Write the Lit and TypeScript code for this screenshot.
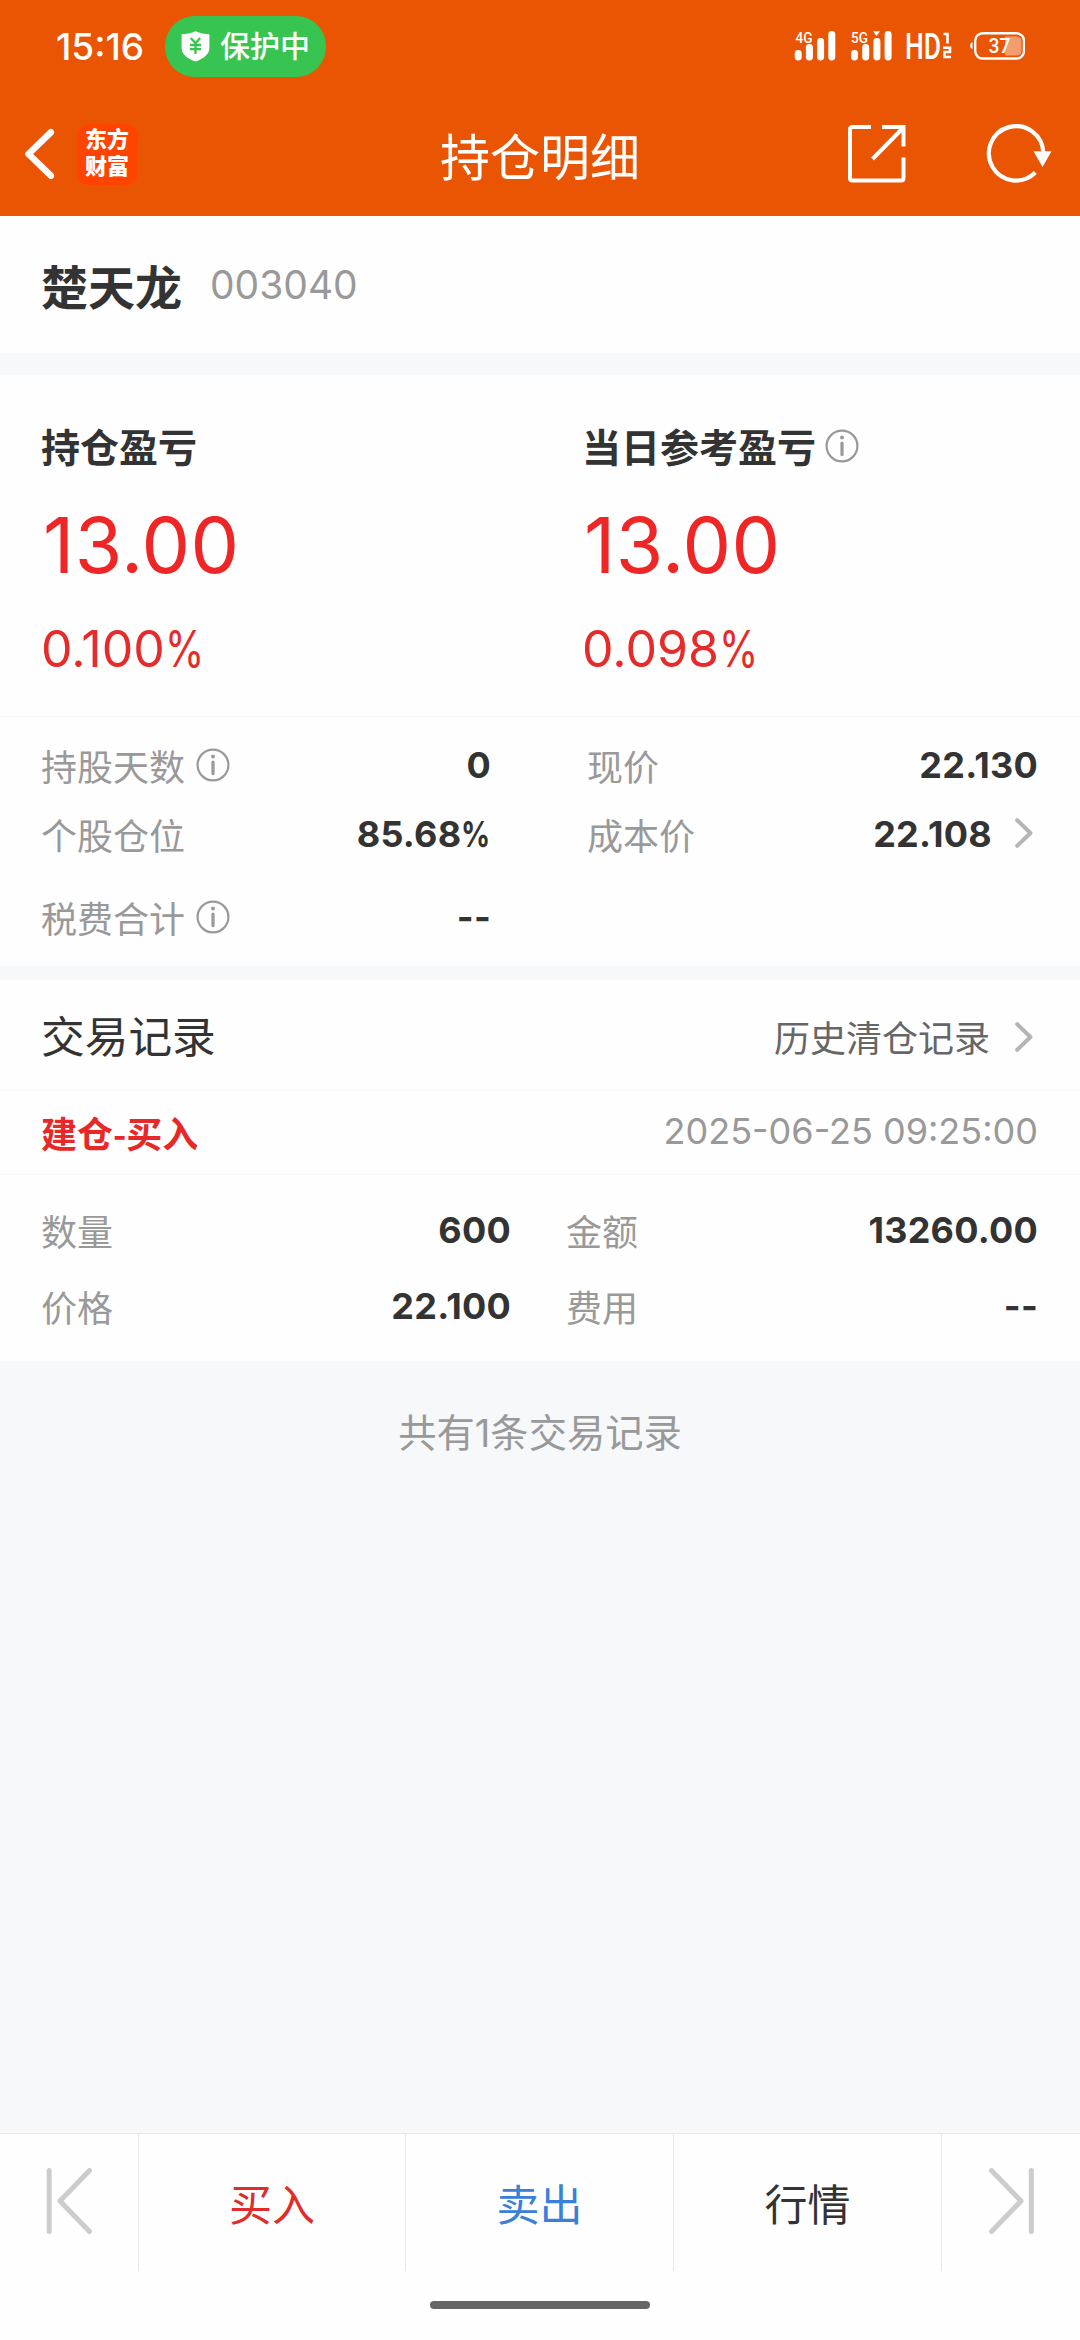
import { LitElement, html, css, svg, nothing } from "lit";
import { customElement, property } from "lit/decorators.js";

@customElement("info-icon")
class InfoIcon extends LitElement {
  static styles = css`
    :host { display: block; width: 34px; height: 34px; }
    svg { display: block; }
  `;
  render() {
    return html`<svg width="34" height="34" viewBox="0 0 34 34" fill="none">
      <circle cx="17" cy="17" r="15.4" stroke="#999" stroke-width="2.2" />
      <circle cx="17" cy="8.6" r="2" fill="#999" />
      <path d="M17 14.2V25.6" stroke="#999" stroke-width="3.2" stroke-linecap="round" />
    </svg>`;
  }
}

@customElement("chevron-icon")
class ChevronIcon extends LitElement {
  static styles = css`
    :host { display: block; width: 18px; height: 30px; }
    svg { display: block; }
  `;
  render() {
    return html`<svg width="18" height="30" viewBox="0 0 18 30" fill="none">
      <path d="M2.2 2.2L15.4 15L2.2 27.8" stroke="#b5b5b5" stroke-width="4" stroke-linecap="round" stroke-linejoin="round" />
    </svg>`;
  }
}

/** A number whose trailing percent sign is set narrower than the digits. */
@customElement("figure-text")
class FigureText extends LitElement {
  @property() value = "";
  static styles = css`
    :host { display: inline-block; white-space: nowrap; }
    .sign { display: inline-block; transform: scaleX(0.8); transform-origin: left; margin-right: -0.2em; }
  `;
  render() {
    const percent = this.value.endsWith("%");
    return html`${percent ? this.value.slice(0, -1) : this.value}${percent ? html`<span class="sign">%</span>` : nothing}`;
  }
}

@customElement("data-pair")
class DataPair extends LitElement {
  @property() label = "";
  @property() value = "";
  @property({ type: Boolean }) info = false;
  @property({ type: Boolean }) arrow = false;
  static styles = css`
    :host {
      display: flex;
      align-items: center;
      height: 56px;
      font-size: 36px;
      line-height: 56px;
      white-space: nowrap;
    }
    .label { color: #999; padding-top: 3px; margin-left: -1px; }
    .info { margin: -3px 0 0 11px; }
    .value { margin: -2px 0 0 auto; color: #333; font-weight: 700; letter-spacing: 0.25px; }
    .arrow { margin: -4px 5px 0 23px; }
  `;
  render() {
    return html`
      <span class="label">${this.label}</span>
      ${this.info ? html`<info-icon class="info"></info-icon>` : nothing}
      <figure-text class="value" .value=${this.value}></figure-text>
      ${this.arrow ? html`<chevron-icon class="arrow"></chevron-icon>` : nothing}
    `;
  }
}

@customElement("status-bar")
class StatusBar extends LitElement {
  static styles = css`
    :host { display: flex; height: 92px; padding: 0 55px 0 56px; align-items: center; color: #fff; box-sizing: border-box; }
    .time { font-size: 37px; font-weight: 500; line-height: 60px; margin-top: 2px; width: 109px; }
    .pill { display: flex; align-items: center; width: 161px; height: 61px; border-radius: 30px; background: #38c451; box-sizing: border-box; padding-left: 16px; gap: 10px; font-size: 30px; font-weight: 500; line-height: 61px; white-space: nowrap; }
    .right { margin-left: auto; }
    svg { display: block; }
    text { font-family: Roboto, Inter, sans-serif; fill: #fff; }
  `;
  private bars(x: number) {
    return [[0, 50], [11.2, 44], [22.4, 38], [33.6, 31]].map(
      ([dx, y]) => svg`<rect x=${x + dx} y=${y} width="7" height=${60.5 - y} rx="3.4" fill="#fff"/>`
    );
  }
  render() {
    return html`
      <span class="time">15:16</span>
      <div class="pill">
        <svg width="29" height="31" viewBox="0 0 29 31">
          <path d="M14.5 0.3C10 2.4 5.500 3 0.6 3.200V17C0.6 23.500 6.500 27.500 14.5 30.600C22.500 27.500 28.400 23.500 28.400 17V3.200C23.500 3 19 2.400 14.5 0.3Z" fill="#fff" />
          <path d="M9.800 7L14.5 12.200L19.200 7M9 14H20M9 18.200H20M14.5 12V23" fill="none" stroke="#38c451" stroke-width="2.300" />
        </svg>
        <span>保护中</span>
      </div>
      <svg class="right" width="235" height="92" viewBox="790 0 235 92">
        <text x="795.500" y="42.500" font-size="15.500" font-weight="500" textLength="17" lengthAdjust="spacingAndGlyphs">4G</text>
        ${this.bars(794.7)}
        <text x="851" y="42.500" font-size="15.500" font-weight="500" textLength="17" lengthAdjust="spacingAndGlyphs">5G</text>
        ${this.bars(851)}
        <path d="M873 31.200H880L876.500 36Z" fill="#fff" />
        <text x="905" y="58.500" font-size="36" font-weight="500" textLength="36" lengthAdjust="spacingAndGlyphs">HD</text>
        <path d="M943.500 34H947.500V43.500M943 47.800H950V52H944.500V57H951" fill="none" stroke="#fff" stroke-width="2.600" />
        <rect x="975.200" y="33.200" width="48.800" height="25.300" rx="7.500" fill="none" stroke="#fff" stroke-width="2.400" />
        <path d="M1005 36.500H1016.500Q1021.500 36.500 1021.500 41.500V50.500Q1021.500 55.500 1016.500 55.500H1005Z" fill="#fff" opacity=".42" />
        <path d="M972.500 42V49Q970 48 970 45.500Q970 43 972.500 42Z" fill="#fff" />
        <text x="988.500" y="52.500" font-size="20" font-weight="500" textLength="22" lengthAdjust="spacingAndGlyphs">37</text>
      </svg>
    `;
  }
}

@customElement("nav-bar")
class NavBar extends LitElement {
  static styles = css`
    :host { display: grid; grid-template-columns: 1fr auto 1fr; align-items: center; height: 124px; padding: 0 27px 0 24px; color: #fff; box-sizing: border-box; }
    .side { display: flex; align-items: center; }
    .logo { width: 61px; height: 61px; margin-left: 22px; border-radius: 12px; background: #ff4300; box-sizing: border-box; padding: 2px 0 0 8px; font-size: 22px; font-weight: 900; line-height: 27px; white-space: nowrap; }
    .logo span { display: block; }
    .title { font-size: 50px; line-height: 64px; padding: 8px 0 0 3px; }
    .end { justify-content: flex-end; gap: 80px; }
    svg { display: block; }
  `;
  render() {
    return html`
      <div class="side">
        <svg width="31" height="52" viewBox="0 0 31 52" fill="none">
          <path d="M26.800 4.300L4.500 26L26.800 47.700" stroke="#fff" stroke-width="6.600" stroke-linecap="round" stroke-linejoin="round" />
        </svg>
        <div class="logo"><span>东方</span><span>财富</span></div>
      </div>
      <div class="title">持仓明细</div>
      <div class="side end">
        <svg width="59" height="60" viewBox="0 0 59 60" fill="none" stroke="#fff" stroke-width="4">
          <path d="M24 3H5.500Q3 3 3 5.500V54Q3 56.500 5.500 56.500H54Q56.500 56.500 56.500 54V33.500M35 3H56.500V22.500" />
          <path d="M25.500 35L56 4" />
        </svg>
        <svg width="67" height="60" viewBox="0 0 67 60" fill="none">
          <path d="M49.300 48.600A27.200 27.200 0 1 1 57.300 29" stroke="#fff" stroke-width="4.200" />
          <path d="M47.500 27.300H65.500L56.500 43Z" fill="#fff" />
        </svg>
      </div>
    `;
  }
}

@customElement("action-bar")
class ActionBar extends LitElement {
  static styles = css`
    :host { display: block; height: 207px; background: #fefefe; border-top: 1px solid #e9e9e9; box-sizing: border-box; }
    .cells { display: grid; grid-template-columns: 139px 267px 268px 268px 138px; height: 137px; }
    .cell { display: flex; align-items: center; justify-content: center; border-right: 1px solid #e9e9e9; font-size: 43px; line-height: 60px; color: #333; box-sizing: border-box; padding-top: 5px; }
    .cell:last-child { border-right: 0; }
    .buy { color: #e12c2c; }
    .sell { color: #3a80d8; }
    .step { padding: 0 0 4px; }
    .home { width: 220px; height: 8px; border-radius: 4px; background: #666; margin: 30px auto 0; }
    svg { display: block; }
  `;
  render() {
    return html`
      <div class="cells">
        <div class="cell step">
          <svg width="46" height="68" viewBox="0 0 46 68" fill="none" stroke="#ccc" stroke-width="5" stroke-linecap="round" stroke-linejoin="round">
            <path d="M3.200 3.500V64.500M43.500 3.500L14 34L43.500 64.500" />
          </svg>
        </div>
        <div class="cell buy">买入</div>
        <div class="cell sell">卖出</div>
        <div class="cell">行情</div>
        <div class="cell step">
          <svg width="46" height="68" viewBox="0 0 46 68" fill="none" stroke="#ccc" stroke-width="5" stroke-linecap="round" stroke-linejoin="round">
            <path d="M43.300 3.500V64.500M3.500 3.500L33 34L3.500 64.500" />
          </svg>
        </div>
      </div>
      <div class="home"></div>
    `;
  }
}

@customElement("app-root")
class AppRoot extends LitElement {
  static styles = css`
    :host { display: flex; flex-direction: column; width: 1080px; height: 2340px; background: #f6f8fa; font-family: Inter, "Noto Sans CJK SC", sans-serif; color: #333; overflow: hidden; }
    .header { height: 216px; background: #ea5504; }
    .panel { background: #fefefe; box-sizing: border-box; }
    .stock { display: flex; align-items: center; height: 137px; padding: 6px 42px 0 41px; margin-bottom: 22px; gap: 28px; }
    .name { font-size: 47px; font-weight: 700; line-height: 60px; }
    .code { font-size: 39px; line-height: 60px; color: #999; margin-top: -6px; }
    .profit { display: grid; grid-template-columns: 541px 1fr; height: 342px; padding: 48px 0 0 41px; border-bottom: 1px solid #f5f6f7; }
    .head { display: flex; align-items: center; font-size: 39px; font-weight: 700; line-height: 50px; height: 50px; gap: 9px; }
    .head info-icon { margin-top: -5px; }
    .amount { font-size: 77px; line-height: 90px; margin: 27px 0 0 2px; letter-spacing: 0.4px; color: #ef2626; }
    .percent { font-size: 50px; line-height: 60px; margin-top: 29px; color: #e62b2b; }
    .facts { display: grid; grid-template-columns: 449px 450px; column-gap: 97px; height: 249px; padding: 21px 42px 0 42px; margin-bottom: 14px; align-content: start; }
    .facts .second { margin-top: 13px; }
    .facts .third { margin-top: 27px; }
    .records-head { display: flex; align-items: center; justify-content: space-between; height: 111px; padding: 6px 47px 0 41px; border-bottom: 1px solid #f5f6f7; }
    .records-title { font-size: 43.7px; line-height: 60px; }
    .history { display: flex; align-items: center; gap: 25px; font-size: 36px; line-height: 56px; color: #666; padding-top: 2px; }
    .history chevron-icon { margin-top: -4px; }
    .record { display: flex; align-items: center; justify-content: space-between; height: 84px; padding: 0 42px 0 41px; border-bottom: 1px solid #f5f6f7; font-size: 36px; line-height: 56px; }
    .kind { font-family: "Noto Sans CJK SC", sans-serif; color: #e82828; font-weight: 700; margin-top: -2px; }
    .date { color: #999; margin-top: -3px; }
    .detail { display: grid; grid-template-columns: 469px 471px; column-gap: 56px; row-gap: 20px; height: 186px; padding: 28px 42px 0 42px; align-content: start; }
    .count { flex: 1; padding-top: 42px; font-size: 38.3px; line-height: 60px; text-align: center; color: #999; }
  `;
  render() {
    return html`
      <div class="header">
        <status-bar></status-bar>
        <nav-bar></nav-bar>
      </div>
      <div class="panel stock">
        <span class="name">楚天龙</span>
        <span class="code">003040</span>
      </div>
      <div class="panel profit">
        <div>
          <div class="head">持仓盈亏</div>
          <div class="amount">13.00</div>
          <div class="percent"><figure-text value="0.100%"></figure-text></div>
        </div>
        <div>
          <div class="head">当日参考盈亏<info-icon></info-icon></div>
          <div class="amount">13.00</div>
          <div class="percent"><figure-text value="0.098%"></figure-text></div>
        </div>
      </div>
      <div class="panel facts">
        <data-pair label="持股天数" value="0" info></data-pair>
        <data-pair label="现价" value="22.130"></data-pair>
        <data-pair class="second" label="个股仓位" value="85.68%"></data-pair>
        <data-pair class="second" label="成本价" value="22.108" arrow></data-pair>
        <data-pair class="third" label="税费合计" value="--" info></data-pair>
      </div>
      <div class="panel records-head">
        <span class="records-title">交易记录</span>
        <span class="history">历史清仓记录<chevron-icon></chevron-icon></span>
      </div>
      <div class="panel record">
        <span class="kind">建仓-买入</span>
        <span class="date">2025-06-25 09:25:00</span>
      </div>
      <div class="panel detail">
        <data-pair label="数量" value="600"></data-pair>
        <data-pair label="金额" value="13260.00"></data-pair>
        <data-pair label="价格" value="22.100"></data-pair>
        <data-pair label="费用" value="--"></data-pair>
      </div>
      <div class="count">共有1条交易记录</div>
      <action-bar></action-bar>
    `;
  }
}
